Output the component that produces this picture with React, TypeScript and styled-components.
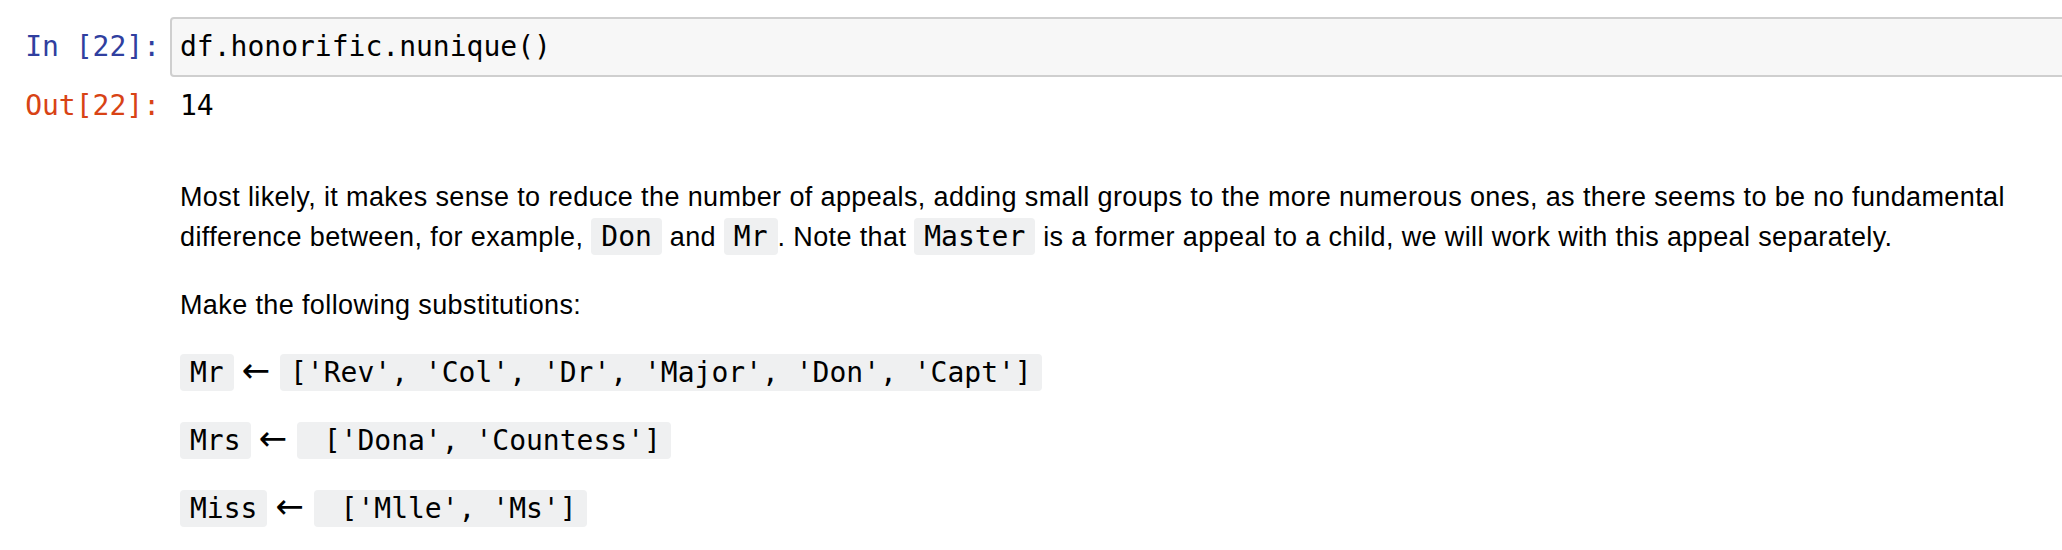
import React from "react";
import styled, { createGlobalStyle } from "styled-components";

const Global = createGlobalStyle`
  html, body { margin: 0; padding: 0; background: #ffffff; overflow: hidden; }
  body { font-family: "Liberation Sans", Arial, sans-serif; color: #000; }
`;

const mono = `"DejaVu Sans Mono", "Liberation Mono", monospace`;

const Notebook = styled.div`
  display: flex;
  flex-direction: column;
  padding-top: 17px;
  width: 2062px;
`;

const CellRow = styled.div<{ $mt?: number }>`
  display: flex;
  align-items: flex-start;
  margin-top: ${(p) => p.$mt ?? 0}px;
`;

const Prompt = styled.div<{ $kind: "in" | "out"; $pt?: number }>`
  flex: 0 0 160px;
  padding: ${(p) => p.$pt ?? 0}px 10px 0 0;
  text-align: right;
  font-family: ${mono};
  font-size: 28px;
  line-height: 40px;
  color: ${(p) => (p.$kind === "in" ? "#303F9F" : "#D84315")};
  white-space: pre;
`;

const InputBox = styled.div`
  flex: 1;
  margin-right: -20px;
  background: #f7f7f7;
  border: 2px solid #cfcfcf;
  border-radius: 4px;
  padding: 8px 8px;
  font-family: ${mono};
  font-size: 28px;
  line-height: 40px;
  color: #000;
  white-space: pre;
`;

const OutputText = styled.div`
  padding-left: 10px;
  font-family: ${mono};
  font-size: 28px;
  line-height: 40px;
  color: #000;
`;

const Markdown = styled.div`
  padding-left: 180px;
  padding-right: 16px;
  margin-top: 23px;
  font-family: "Liberation Sans", Arial, sans-serif;
  font-size: 27px;
  letter-spacing: 0.38px;
  line-height: 40px;
  color: #000;
`;

const Para = styled.p`
  margin: 28px 0;
`;

const Code = styled.code`
  font-family: ${mono};
  font-size: 28px;
  letter-spacing: 0;
  background: #eff0f1;
  border-radius: 4px;
  padding: 2px 10px;
  white-space: pre;
`;

const Arrow = styled.span`
  display: inline-block;
  font-family: "DejaVu Sans", sans-serif;
  font-size: 34px;
  line-height: 1;
  letter-spacing: 0;
  margin: 0 2px 0 0;
`;

export default function App() {
  return (
    <>
      <Global />
      <Notebook>
        <CellRow>
          <Prompt $kind="in" $pt={10}>In [22]:</Prompt>
          <InputBox>df.honorific.nunique()</InputBox>
        </CellRow>
        <CellRow $mt={9}>
          <Prompt $kind="out">Out[22]:</Prompt>
          <OutputText>14</OutputText>
        </CellRow>
        <Markdown>
          <Para>
            Most likely, it makes sense to reduce the number of appeals, adding small groups to the more numerous
            ones, as there seems to be no fundamental difference between, for example, <Code>Don</Code> and{" "}
            <Code>Mr</Code>. Note that <Code>Master</Code> is a former appeal to a child, we will work with this
            appeal separately.
          </Para>
          <Para>Make the following substitutions:</Para>
          <Para>
            <Code>Mr</Code> <Arrow>←</Arrow> <Code>['Rev', 'Col', 'Dr', 'Major', 'Don', 'Capt']</Code>
          </Para>
          <Para>
            <Code>Mrs</Code> <Arrow>←</Arrow> <Code> ['Dona', 'Countess']</Code>
          </Para>
          <Para>
            <Code>Miss</Code> <Arrow>←</Arrow> <Code> ['Mlle', 'Ms']</Code>
          </Para>
        </Markdown>
      </Notebook>
    </>
  );
}
